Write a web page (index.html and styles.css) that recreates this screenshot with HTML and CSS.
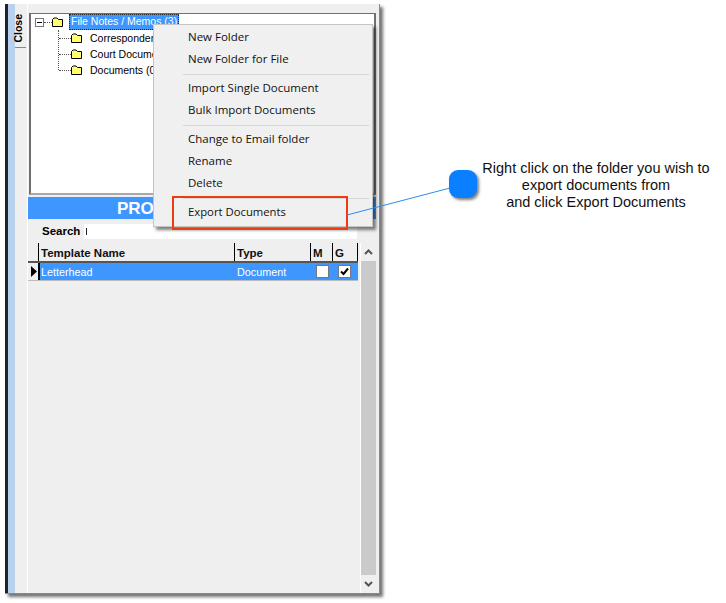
FILE: index.html
```html
<!DOCTYPE html>
<html lang="en">
<head>
<meta charset="utf-8">
<title>Export Documents</title>
<link rel="stylesheet" href="styles.css">
</head>
<body>
<div class="window">
  <div class="strip"></div>
  <div class="tabcol">
    <div class="closetab"><span class="closelabel">Close</span></div>
  </div>
  <div class="main">
    <div class="tree">
      <div class="row root">
        <span class="expander"></span><span class="dots-h short"></span>
        <svg class="folder" viewBox="0 0 11 10"><path d="M.5 9.500V2.500L2 1h3l1.500 1.500h4v7z" fill="#ffff70" stroke="#000"/></svg>
        <span class="sel">File Notes / Memos (3)</span>
      </div>
      <div class="children">
        <div class="row child"><span class="dots-h"></span><svg class="folder" viewBox="0 0 11 10"><path d="M.5 9.500V2.500L2 1h3l1.500 1.500h4v7z" fill="#ffff70" stroke="#000"/></svg><span class="lbl">Correspondence (0)</span></div>
        <div class="row child"><span class="dots-h"></span><svg class="folder" viewBox="0 0 11 10"><path d="M.5 9.500V2.500L2 1h3l1.500 1.500h4v7z" fill="#ffff70" stroke="#000"/></svg><span class="lbl">Court Documents (0)</span></div>
        <div class="row child"><span class="dots-h"></span><svg class="folder" viewBox="0 0 11 10"><path d="M.5 9.500V2.500L2 1h3l1.500 1.500h4v7z" fill="#ffff70" stroke="#000"/></svg><span class="lbl">Documents (0)</span></div>
      </div>
    </div>
    <div class="banner">PRO</div>
    <div class="searchbar"><span class="searchlabel">Search</span><span class="searchbox"><span class="caret"></span></span></div>
    <div class="gridwrap">
      <div class="grid">
        <div class="ghead">
          <span class="gc c0"></span><span class="gc c1">Template Name</span><span class="gc c2">Type</span><span class="gc c3">M</span><span class="gc c4">G</span>
        </div>
        <div class="grow">
          <span class="indicator"><svg viewBox="0 0 6 11" width="6" height="11"><path d="M0 0l6 5.500-6 5.500z" fill="#000"/></svg></span>
          <span class="cell c1">Letterhead</span><span class="cell c2">Document</span>
          <span class="cell c3"><span class="cb"></span></span>
          <span class="cell c4"><span class="cb"><svg viewBox="0 0 11 11" width="11" height="11"><path d="M2 5.500l2.500 2.500L9 2.500" fill="none" stroke="#000" stroke-width="2"/></svg></span></span>
        </div>
      </div>
      <div class="scrollbar">
        <span class="sbtn"><svg viewBox="0 0 9 6" width="9" height="6"><path d="M1 5l3.500-3.500L8 5" fill="none" stroke="#555" stroke-width="2"/></svg></span>
        <span class="track"></span>
        <span class="sbtn"><svg viewBox="0 0 9 6" width="9" height="6"><path d="M1 1l3.500 3.500L8 1" fill="none" stroke="#555" stroke-width="2"/></svg></span>
      </div>
    </div>
  </div>
</div>

<div class="menu">
  <div class="mi">New Folder</div>
  <div class="mi">New Folder for File</div>
  <div class="sep"></div>
  <div class="mi">Import Single Document</div>
  <div class="mi">Bulk Import Documents</div>
  <div class="sep"></div>
  <div class="mi">Change to Email folder</div>
  <div class="mi">Rename</div>
  <div class="mi">Delete</div>
  <div class="sep"></div>
  <div class="mi mi-last">Export Documents</div>
</div>
<div class="redbox"></div>
<svg class="leader" viewBox="0 0 726 603" width="726" height="603"><line x1="347" y1="215" x2="450" y2="188" stroke="#2d8df0" stroke-width="1"/></svg>
<div class="knob"></div>
<div class="callout">Right click on the folder you wish to<br>export documents from<br>and click Export Documents</div>
</body>
</html>
```
FILE: styles.css
```css
html, body { margin: 0; padding: 0; background: #fff; }
body { width: 726px; height: 603px; position: relative; overflow: hidden; font-family: "Liberation Sans", Arial, sans-serif; }

.window {
  display: flex;
  width: 374px;
  height: 589px;
  margin: 4px 0 0 5px;
  background: #efefef;
  border-right: 1px solid #8a8a8a;
  border-bottom: 1px solid #8a8a8a;
  box-shadow: 3px 3px 3px rgba(0,0,0,.55);
}
.strip { width: 3px; background: #1c2430; flex: none; }
.tabcol { width: 19px; flex: none; background: linear-gradient(90deg, #b8d1ec 0 7px, #efefef 7px); }
.closetab { margin: 0 1px 0 7px; height: 43px; border-bottom: 1px solid #888; position: relative; }
.closelabel { position: absolute; left: -2px; top: 10px; writing-mode: vertical-rl; transform: rotate(180deg); font-size: 10.500px; font-weight: bold; color: #000; line-height: 11px; }

.main { flex: 1; display: flex; flex-direction: column; padding-top: 9px; padding-right: 3px; min-width: 0; border-left: 1px solid #fff; }
.tree {
  height: 182px; margin-left: 1px;
  box-sizing: border-box;
  flex: none;
  background: #fff;
  border: 2px solid #707070;
  border-top-width: 1px;
  border-bottom-color: #a9a9a9;
  padding: 0 0 0 4px;
  font-size: 10.500px;
  color: #000;
}
.row { display: flex; align-items: center; height: 16px; }
.expander { width: 9px; height: 9px; border: 1px solid #777; box-sizing: border-box; background: linear-gradient(#000,#000) center/5px 1px no-repeat #fff; flex: none; }
.dots-h { width: 12px; border-top: 1px dotted #555; flex: none; }
.dots-h.short { width: 8px; }
.folder { width: 11px; height: 10px; flex: none; margin-right: 8px; }
.root .folder { margin-right: 6px; }
.sel { background: #3d97ff; color: #fff; outline: 1px dotted #222; outline-offset: -1px; padding: 1px 2px 2px 2px; line-height: 13px; white-space: nowrap; }
.children { margin-left: 23px; border-left: 1px dotted #555; height: 40px; }
.child { height: 16px; }
.lbl { line-height: 13px; white-space: nowrap; }

.banner { height: 22px; margin-top: 2px; padding-left: 89px; background: #3d97ff; color: #fff; font-size: 17px; font-weight: bold; line-height: 23px; flex: none; }
.searchbar { display: flex; align-items: center; height: 24px; flex: none; }
.searchlabel { font-size: 11.500px; font-weight: bold; margin-left: 14px; width: 42px; }
.searchbox { width: 273px; height: 15px; background: #fff; display: flex; align-items: center; }
.caret { width: 1px; height: 7px; background: #223; margin-left: 2px; }

.gridwrap { flex: 1; display: flex; min-height: 0; }
.grid { width: 330px; flex: none; }
.ghead { display: flex; height: 18px; border-bottom: 2px solid #555; font-size: 11.500px; font-weight: bold; }
.gc { display: flex; align-items: center; padding: 2px 0 0 2px; box-sizing: border-box; border-right: 1px solid #000; color: #111; }
.c0 { width: 11px; padding: 0; }
.c1 { width: 196px; }
.c2 { width: 76px; }
.c3 { width: 22px; }
.c4 { width: 25px; }
.grow { display: flex; height: 17px; border-bottom: 1px solid #bbb; font-size: 10.800px; color: #fff; }
.indicator { width: 12px; flex: none; display: flex; align-items: center; padding-left: 3px; box-sizing: border-box; background: #efefef; border-right: 2px solid #000; }
.cell { background: #3d97ff; display: flex; align-items: center; padding-left: 2px; box-sizing: border-box; }
.grow .c1 { width: 195px; padding-left: 1px; }
.grow .c3 { justify-content: center; padding: 0; }
.grow .c4 { justify-content: center; padding: 0 2px 0 0; }
.cb { width: 13px; height: 13px; box-sizing: border-box; background: #fff; border: 1px solid #777; display: flex; align-items: center; justify-content: center; }
.scrollbar { width: 15px; margin-left: 2px; flex: none; display: flex; flex-direction: column; border-left: 1px solid #fff; }
.sbtn { height: 18px; flex: none; display: flex; align-items: center; justify-content: center; }
.track { flex: 1; background: #cacaca; }

.menu {
  position: absolute; left: 153px; top: 24px; width: 220px; height: 203px;
  box-sizing: border-box;
  background: #f0f0f0;
  border: 1px solid #c4c4c4;
  box-shadow: 3px 3px 3px rgba(0,0,0,.5);
  padding: 1px 2px 0 2px;
  font-family: "Open Sans", "Noto Sans", sans-serif;
  font-size: 11.500px;
  color: #111;
}
.mi { height: 22px; line-height: 22px; padding-left: 32px; white-space: nowrap; }
.mi-last { font-size: 11.300px; }
.sep { height: 1px; background: #d7d7d7; margin: 4px 1px 2px 27px; }
.redbox { position: absolute; left: 172px; top: 196px; width: 176px; height: 34px; box-sizing: border-box; border: 2px solid #f03a10; }
.leader { position: absolute; left: 0; top: 0; pointer-events: none; }
.knob { position: absolute; left: 449px; top: 170px; width: 28px; height: 28px; border-radius: 9px; background: #0a7fff; box-shadow: 2px 2px 3px rgba(0,0,0,.5); }
.callout { position: absolute; left: 466px; top: 160px; width: 260px; text-align: center; font-size: 14.500px; line-height: 17px; color: #111; }
```
